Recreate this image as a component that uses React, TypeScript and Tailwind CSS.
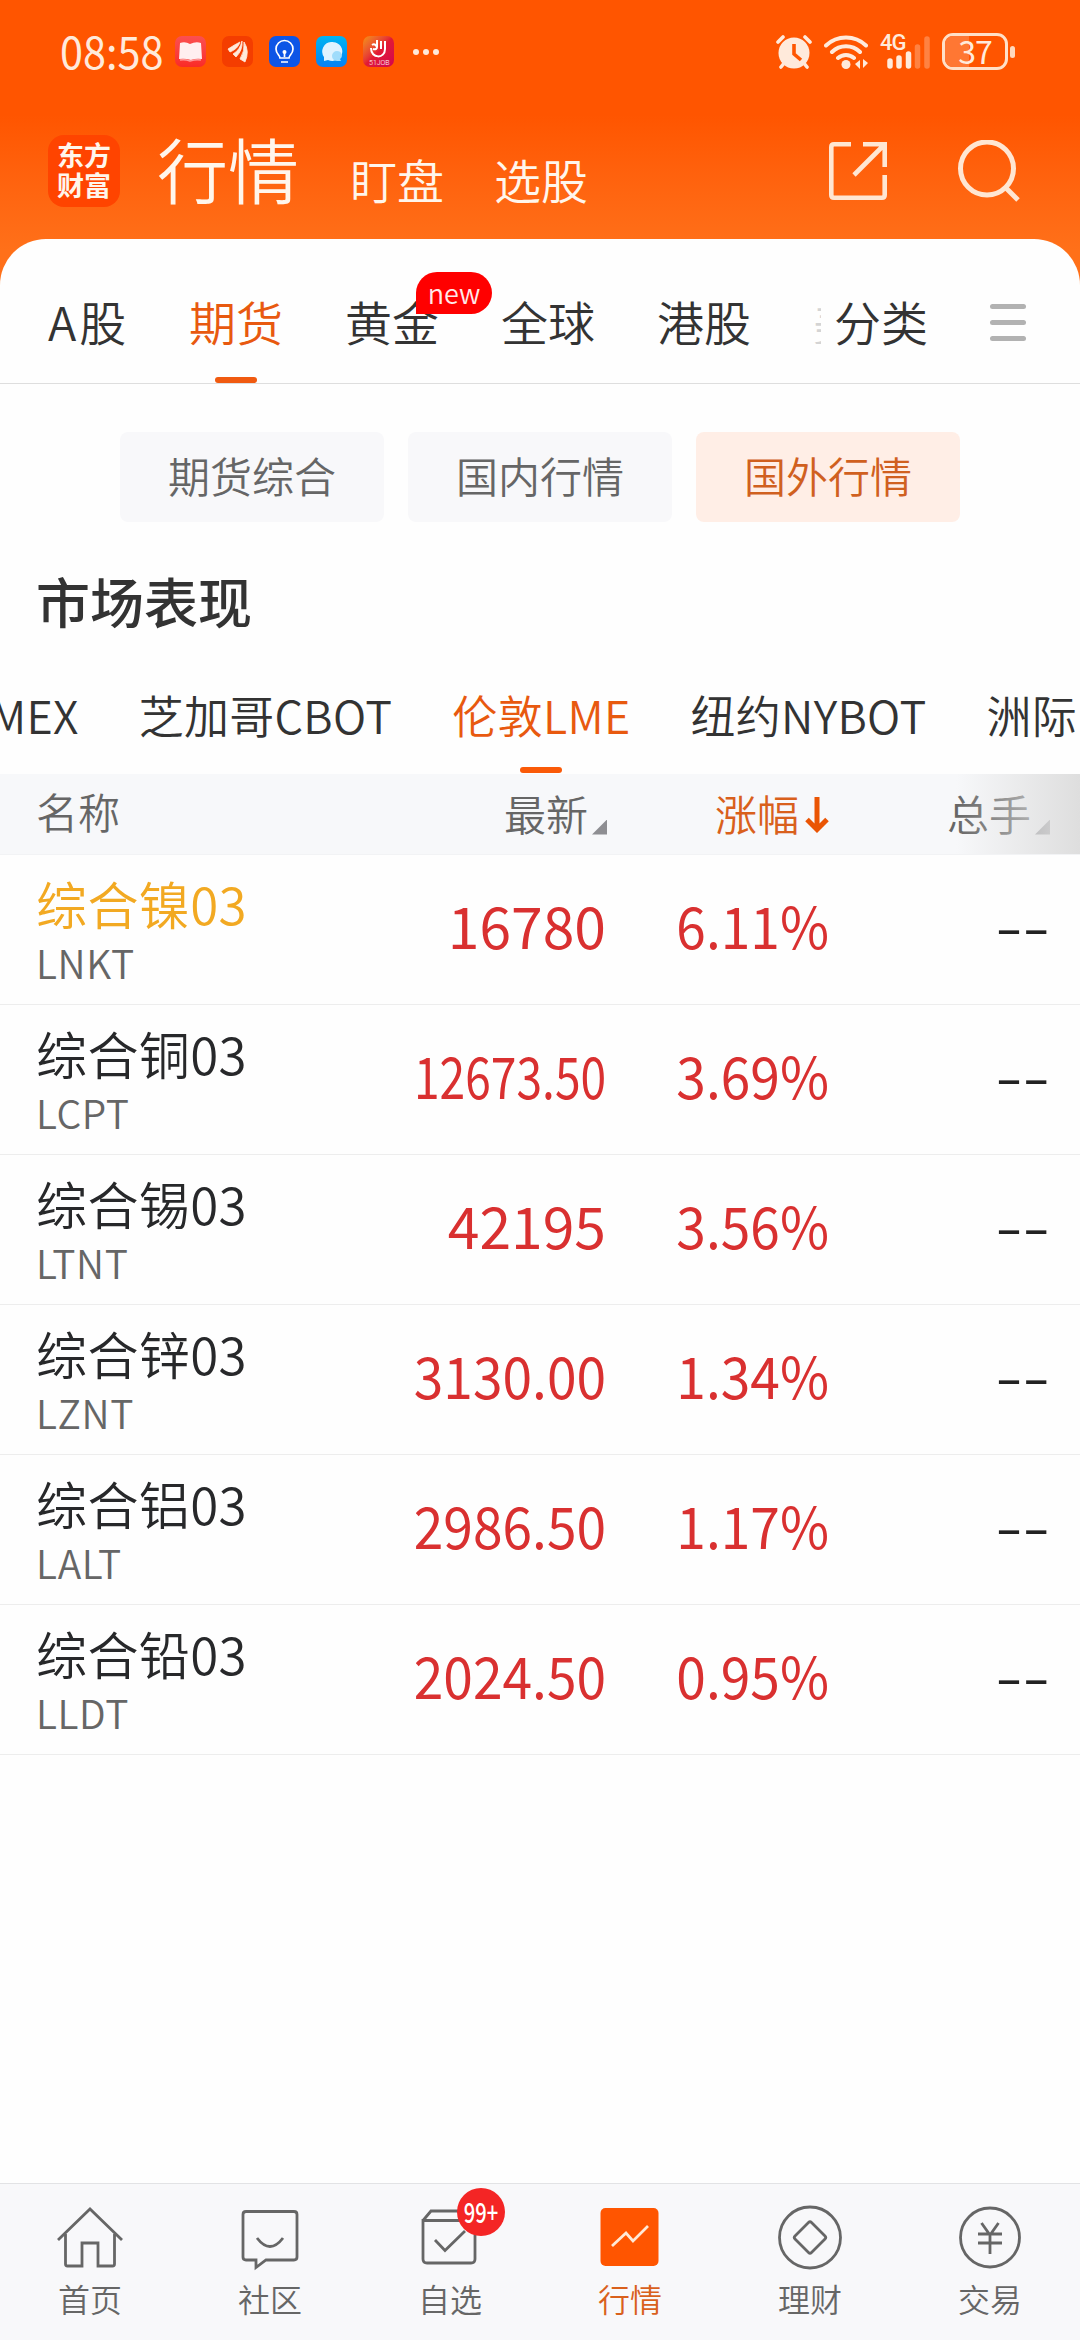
import type { ReactNode } from 'react';

const quotes = [
  { name: '综合镍03', code: 'LNKT', price: '16780', change: '6.11%', fit: 'scale-x-100', highlight: true },
  { name: '综合铜03', code: 'LCPT', price: '12673.50', change: '3.69%', fit: 'scale-x-[0.81]' },
  { name: '综合锡03', code: 'LTNT', price: '42195', change: '3.56%', fit: 'scale-x-100' },
  { name: '综合锌03', code: 'LZNT', price: '3130.00', change: '1.34%', fit: 'scale-x-[0.935]' },
  { name: '综合铝03', code: 'LALT', price: '2986.50', change: '1.17%', fit: 'scale-x-[0.935]' },
  { name: '综合铅03', code: 'LLDT', price: '2024.50', change: '0.95%', fit: 'scale-x-[0.935]' },
];

const topTabs = ['A股', '期货', '黄金', '全球', '港股'];
const segments = ['期货综合', '国内行情', '国外行情'];

function AppIcon({ className, children }: { className: string; children: ReactNode }) {
  return (
    <span className={`block h-[31px] w-[31px] overflow-hidden rounded-[7px] ${className}`}>
      <svg viewBox="0 0 31 31" className="h-full w-full" fill="none">
        {children}
      </svg>
    </span>
  );
}

function StatusBar() {
  return (
    <div className="flex h-[103px] items-center pl-[60px] pr-[65px] text-[#ffeadb]">
      <span className="w-[115px] origin-left scale-x-[0.92] pb-[4px] text-[45px] font-normal leading-none">08:58</span>
      <div className="flex gap-4">
        <AppIcon className="bg-linear-to-b from-[#fb4f50] to-[#fa2a26]">
          <path d="M5 7q5-2 10 1q6-3 11-1l1 16q-6-1-11 1q-6-2-12-1z" fill="#ffeff0" />
          <path d="M5 24q5-1 10 1q6-2 11-1" stroke="#ff9a9a" strokeWidth="1.5" />
        </AppIcon>
        <AppIcon className="bg-[#f43d00]">
          <path d="M6 13Q12 9 18 6Q16 13 8 16zM11 18Q18 14 20 5q1 9-6 16zM18 23Q23 15 22 6q6 9 1 20z" fill="#ffeadb" stroke="#ffeadb" strokeWidth="0.8" />
        </AppIcon>
        <AppIcon className="bg-[#0d55e6]">
          <path d="M11 22c0-3-4-4-4-9a8.500 8.500 0 0 1 17 0c0 5-4 6-4 9zM12 26h7M15.500 21v-5" stroke="#fff" strokeWidth="1.700" />
          <circle cx="15.500" cy="16" r="2" fill="#fff" />
        </AppIcon>
        <AppIcon className="bg-linear-to-b from-[#03b4f1] to-[#0a80f3]">
          <path d="M15 6a10 9.500 0 1 1-3 18l-4 1v-4A9.500 9.500 0 0 1 15 6z" fill="#dff3ff" />
          <path d="M21 15a5 4.500 0 0 1 3 8l1 2h-4a5 5 0 0 1 0-10z" fill="#9fdcfb" />
        </AppIcon>
        <AppIcon className="bg-linear-to-br from-[#f4900f] via-[#e21a35] to-[#d3024f]">
          <path d="M8 12c0 11 14 11 14 1V5M14 4v7M18 5v8M9 9q3-2 5 2q0 3-4 2" stroke="#fff" strokeWidth="2" />
          <text x="6" y="28.500" fontSize="7" fill="#fff" fontFamily="Roboto">51JOB</text>
        </AppIcon>
      </div>
      <div className="ml-[19px] flex gap-1">
        <i className="size-1.5 rounded-full bg-[#ffeadb]" />
        <i className="size-1.5 rounded-full bg-[#ffeadb]" />
        <i className="size-1.5 rounded-full bg-[#ffeadb]" />
      </div>

      <div className="ml-auto flex items-center">
        <svg viewBox="0 0 36 34" className="h-[34px] w-9" fill="none">
          <circle cx="18" cy="18" r="15.500" fill="#ffeadb" />
          <path d="M2 7l5-5M34 7l-5-5M5 32l4-5M31 32l-4-5" stroke="#ffeadb" strokeWidth="3.600" strokeLinecap="round" />
          <path d="M18 9v10l7 6" stroke="#ff5500" strokeWidth="3.600" />
        </svg>
        <svg viewBox="0 0 44 34" className="ml-3 h-[34px] w-11" fill="none" stroke="#ffeadb" strokeLinecap="round">
          <path d="M2 10.500a29 29 0 0 1 40 0M8 17a20 20 0 0 1 28 0M14 23a12 12 0 0 1 16 0" strokeWidth="4" />
          <circle cx="22" cy="29.500" r="4.500" fill="#ffeadb" stroke="none" />
          <path d="M36 25v9l-5-5zM39 24v9l5-5z" fill="#ffeadb" stroke="none" />
        </svg>
        <div className="relative ml-3 h-[34px] w-[50px]">
          <span className="absolute -top-px left-0 font-[Roboto] text-[22px] font-medium leading-[18px] tracking-[-1px]">4G</span>
          <svg viewBox="0 0 50 34" className="absolute inset-0" stroke="#ffeadb" strokeWidth="5.500" strokeLinecap="round">
            <path d="M10 26v5M19 23v8M28.500 19v12" />
            <path d="M37.500 12v19M47 4v27" opacity="0.3" />
          </svg>
        </div>
        <div className="relative ml-3 flex h-[37px] w-[66px] items-center justify-center overflow-hidden rounded-[11px] border-[3px] border-[#ffe0c8]">
          <i className="absolute inset-y-0 left-0 w-6 bg-[#ff7733]" />
          <span className="relative pb-[3px] text-[32px] font-normal leading-none tracking-[-1px]">37</span>
        </div>
        <i className="ml-[2px] h-3 w-[5px] rounded-full bg-[#ffd9bd]" />
      </div>
    </div>
  );
}

function Header() {
  return (
    <header className="flex h-[136px] items-center pl-12 pr-[60px] text-[#fff6ec]">
      <div className="flex size-[72px] items-center justify-center rounded-[16px] bg-[#ff4400] pb-[3px] text-center text-[27px] font-bold leading-[30px]">
        东方
        <br />
        财富
      </div>
      <h1 className="ml-[37px] pb-2 text-[71px] leading-none">行情</h1>
      <span className="ml-[51px] mt-[15px] text-[47px] leading-none">盯盘</span>
      <span className="ml-[50px] mt-[15px] text-[47px] leading-none">选股</span>
      <svg viewBox="0 0 58 58" className="ml-auto size-[58px]" fill="none" stroke="#ffe6d2" strokeWidth="4.600">
        <path d="M22 2.300H5q-2.700 0-2.700 2.700V53q0 2.700 2.700 2.700H53q2.700 0 2.700-2.700V33M34 2.300H55.700V25M55 3L25 33" />
      </svg>
      <svg viewBox="0 0 62 62" className="ml-[71px] size-[62px]" fill="none" stroke="#ffe6d2" strokeWidth="5">
        <circle cx="29" cy="28.500" r="26.500" />
        <path d="M47.500 47.500L60 60" />
      </svg>
    </header>
  );
}

function CategoryTabs() {
  return (
    <nav className="flex h-[145px] items-center border-b border-[#dedede] pl-12 pt-[18px] text-[47px] leading-none text-[#333]">
      <div className="flex gap-[62px]">
        {topTabs.map((tab) => (
          <span
            key={tab}
            className={`relative whitespace-nowrap ${tab === '期货' ? 'text-[#e8590f]' : ''} ${tab === 'A股' ? 'w-[79px] tracking-[3px]' : ''}`}
          >
            {tab}
            {tab === '期货' && <i className="absolute left-[26px] top-[80px] h-1.5 w-[42px] rounded-full bg-[#f05a10]" />}
            {tab === '黄金' && (
              <em className="absolute -top-[25px] left-[71px] flex h-[42px] w-[76px] items-center justify-center rounded-[21px] rounded-bl-none bg-[#ff0000] pb-[1px] text-[27px] not-italic text-[#ffe9e9]">
                new
              </em>
            )}
          </span>
        ))}
      </div>
      <span className="ml-[62px] w-2 overflow-hidden whitespace-nowrap opacity-20">美</span>
      <span className="ml-[13px]">分类</span>
      <div className="ml-auto mr-[54px] mt-1 flex flex-col gap-[11px]">
        <i className="h-[5px] w-9 rounded-full bg-[#b2b2b2]" />
        <i className="h-[5px] w-9 rounded-full bg-[#b2b2b2]" />
        <i className="h-[5px] w-9 rounded-full bg-[#b2b2b2]" />
      </div>
    </nav>
  );
}

function ExchangeTabs() {
  return (
    <div className="flex h-[90px] items-center overflow-hidden pb-[29px] text-[45px] leading-none tracking-[0.3px] text-[#333]">
      <div className="-ml-[71px] flex gap-[60px] whitespace-nowrap">
        <span>COMEX</span>
        <span>芝加哥CBOT</span>
        <span className="relative text-[#e8590f]">
          伦敦LME
          <i className="absolute left-1/2 top-[75px] h-1.5 w-[42px] -translate-x-1/2 rounded-full bg-[#fa5a08]" />
        </span>
        <span>纽约NYBOT</span>
        <span>洲际ICE</span>
      </div>
    </div>
  );
}

function SortCorner() {
  return <i className="-mb-px ml-1 size-[15px] self-end bg-[#8e8e92] [clip-path:polygon(100%_0,100%_100%,0_100%)]" />;
}

function QuoteTable() {
  return (
    <section>
      <div className="relative grid h-[81px] grid-cols-[264px_307px_222px_221px] items-center border-b border-[#f2f3f5] bg-[#f7f8fa] pl-9 text-[42px] leading-none text-[#666]">
        <span className="pb-[7px]">名称</span>
        <span className="flex justify-end pb-[3px]">最新<SortCorner /></span>
        <span className="flex items-center justify-end pb-[3px] text-[#d9601c]">
          涨幅
          <svg viewBox="0 0 24 38" className="-mb-[5px] ml-1.5 h-[38px] w-6" fill="none" stroke="#ea5504" strokeWidth="5">
            <path d="M12 1v31M2 23.500l10 10l10-10" />
          </svg>
        </span>
        <span className="flex justify-end pb-[3px]">总手<SortCorner /></span>
        <i className="absolute inset-y-0 right-0 w-[124px] bg-linear-to-r from-[#dedede]/0 to-[#dedede]" />
      </div>
      {quotes.map((q) => (
        <div
          key={q.code}
          className="grid h-[150px] grid-cols-[264px_307px_222px_221px] items-center border-b border-[#ededed] pl-9 leading-none"
        >
          <div>
            <div className={`whitespace-nowrap text-[51px] leading-[50px] tracking-[0.4px] ${q.highlight ? 'text-[#f2a922]' : 'text-[#27282a]'}`}>
              {q.name}
            </div>
            <div className="mt-[14px] text-[39px] leading-10 tracking-[0.6px] text-[#666]">{q.code}</div>
          </div>
          <span className={`origin-right pb-2.5 pr-[1px] text-right text-[57px] font-normal text-[#d93030] ${q.fit}`}>{q.price}</span>
          <span className="origin-right scale-x-[0.935] pb-2.5 text-right text-[57px] font-normal text-[#d93030]">{q.change}</span>
          <span className="origin-right scale-x-[1.4] pb-3 text-right text-[57px] text-[#222]">--</span>
        </div>
      ))}
    </section>
  );
}

function NavItem({ label, active, children }: { label: string; active?: boolean; children: ReactNode }) {
  return (
    <div className={`flex w-[180px] flex-col items-center pt-[17px] ${active ? 'text-[#d9601c]' : 'text-[#666]'}`}>
      <div className="relative size-[72px]">
        <svg viewBox="0 0 72 72" className="size-full" fill="none" stroke="#666" strokeWidth="2.800">
          {children}
        </svg>
        {label === '自选' && (
          <b className="absolute left-[43px] top-[-13px] flex size-12 items-center justify-center rounded-full bg-[#f42525] text-[28px] font-medium leading-none text-white">
            <span className="scale-x-[0.72] pb-[3px]">99+</span>
          </b>
        )}
      </div>
      <span className="mt-[9px] text-[32px] leading-none">{label}</span>
    </div>
  );
}

function BottomNav() {
  return (
    <nav className="flex h-[157px] border-t border-[#e2e3e5] bg-[#f8f8fa]">
      <NavItem label="首页">
        <path d="M4 39L36 8L68 39M11.500 33V63q0 2 2 2H28V42H44V65H58.500q2 0 2-2V33" />
      </NavItem>
      <NavItem label="社区">
        <path d="M12 10.500H60q3 0 3 3V56q0 3-3 3H32L22 66.500V59H12q-3 0-3-3V13.500q0-3 3-3zM23 37q13 17 26 0" />
      </NavItem>
      <NavItem label="自选">
        <path d="M9 19.500H61V58q0 4-4 4H13q-4 0-4-4zM9 19.500L17 10H53L61 19.500M21 39l10 10.500L51 30" />
      </NavItem>
      <NavItem label="行情" active>
        <rect x="6.500" y="7" width="58" height="58" rx="5" fill="#ff5500" stroke="none" />
        <path d="M18 45L32 32L39 40L54 25" stroke="#ffe9d6" />
      </NavItem>
      <NavItem label="理财">
        <circle cx="36" cy="36.500" r="30.500" />
        <path d="M34.500 21.500q1.500-1.500 3 0L51 35q1.500 1.500 0 3L37.500 51.500q-1.500 1.500-3 0L21 38q-1.500-1.500 0-3z" />
      </NavItem>
      <NavItem label="交易">
        <circle cx="36" cy="36.500" r="29.500" />
        <path d="M27.500 22L36 34L44.500 22M24 33H48M24 42H48M36 33V53" />
      </NavItem>
    </nav>
  );
}

export default function App() {
  return (
    <div className="flex h-[2340px] w-[1080px] flex-col overflow-hidden bg-linear-to-b from-[#ff5500] from-[115px] to-[#ff7019] to-[250px] font-['Noto_Sans_CJK_SC',sans-serif] font-[350]">
      <StatusBar />
      <Header />
      <main className="flex-1 rounded-t-[46px] bg-[#fefefe]">
        <CategoryTabs />
        <div className="mt-12 flex justify-center gap-6">
          {segments.map((label, i) => (
            <button
              key={label}
              className={`h-[90px] w-[264px] rounded-lg pb-1 text-[42px] leading-none ${i === 2 ? 'bg-[#ffeee6] text-[#d0601f]' : 'bg-[#f8f8fa] text-[#666]'}`}
            >
              {label}
            </button>
          ))}
        </div>
        <h2 className="flex h-[162px] items-center pb-1 pl-9 text-[54px] font-medium leading-none text-[#333]">市场表现</h2>
        <ExchangeTabs />
        <QuoteTable />
      </main>
      <BottomNav />
    </div>
  );
}
